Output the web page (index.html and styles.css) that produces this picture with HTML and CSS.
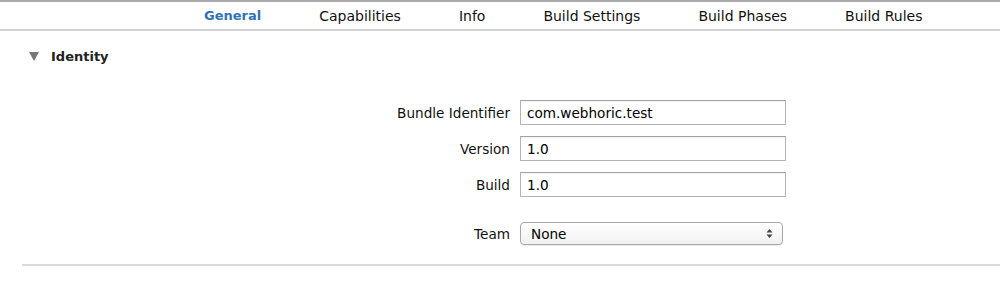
FILE: index.html
```html
<!DOCTYPE html>
<html>
<head>
<meta charset="utf-8">
<link rel="stylesheet" href="styles.css">
</head>
<body>
<nav class="tabs">
  <span class="tab active">General</span>
  <span class="tab">Capabilities</span>
  <span class="tab">Info</span>
  <span class="tab">Build Settings</span>
  <span class="tab">Build Phases</span>
  <span class="tab">Build Rules</span>
</nav>
<section class="section">
  <div class="section-head">
    <span class="disclosure"></span>
    <span class="section-title">Identity</span>
  </div>
  <div class="form">
    <label class="label">Bundle Identifier</label>
    <div class="field">com.webhoric.test</div>
    <label class="label">Version</label>
    <div class="field">1.0</div>
    <label class="label">Build</label>
    <div class="field">1.0</div>
    <label class="label team-label">Team</label>
    <div class="select team-select">
      <span>None</span>
      <svg class="stepper" width="7" height="11" viewBox="0 0 7 11"><path d="M3.5 1 L6.5 4.5 H0.5 Z M3.5 10 L6.5 6.5 H0.5 Z" fill="#444"/></svg>
    </div>
  </div>
  <div class="divider"></div>
</section>
</body>
</html>
```
FILE: styles.css
```css
html, body {
  margin: 0;
  padding: 0;
  background: #fff;
  font-family: "DejaVu Sans", "Liberation Sans", sans-serif;
  color: #111;
}
.tabs {
  display: flex;
  align-items: center;
  gap: 58px;
  height: 27px;
  padding-left: 204px;
  border-top: 2px solid #a9a9a9;
  border-bottom: 2px solid #d2d2d2;
  font-size: 14px;
  color: #111;
}
.tab {
  line-height: 16px;
}
.tab.active {
  color: #2f72b8;
  font-weight: bold;
  font-size: 13px;
}
.section {
  padding-left: 22px;
}
.section-head {
  display: flex;
  align-items: center;
  gap: 12px;
  margin-top: 17px;
  padding-left: 7px;
  height: 16px;
}
.disclosure {
  width: 0;
  height: 0;
  border-left: 5px solid transparent;
  border-right: 5px solid transparent;
  border-top: 9px solid #777;
}
.section-title {
  font-weight: bold;
  font-size: 13px;
  color: #222;
}
.form {
  display: grid;
  grid-template-columns: 488px 266px;
  column-gap: 10px;
  row-gap: 11px;
  margin-top: 36px;
  align-items: center;
  font-size: 13.6px;
}
.label {
  text-align: right;
  color: #111;
}
.field {
  box-sizing: border-box;
  height: 25px;
  border: 1px solid #b4b4b4;
  border-top-color: #a2a2a2;
  box-shadow: inset 0 1px 1px rgba(0,0,0,0.06);
  padding: 0 6px;
  display: flex;
  align-items: center;
  color: #000;
}
.team-label {
  margin-top: 14px;
}
.team-select {
  margin-top: 14px;
}
.select {
  box-sizing: border-box;
  width: 263px;
  height: 23px;
  border: 1px solid #a8a8a8;
  border-radius: 4px;
  background: linear-gradient(#ffffff, #f1f1f1);
  box-shadow: 0 1px 1px rgba(0,0,0,0.08);
  display: flex;
  align-items: center;
  justify-content: space-between;
  padding: 0 9px 0 10px;
  color: #000;
}
.stepper {
  display: block;
}
.divider {
  margin-top: 19px;
  height: 2px;
  background: #dadada;
}
```
